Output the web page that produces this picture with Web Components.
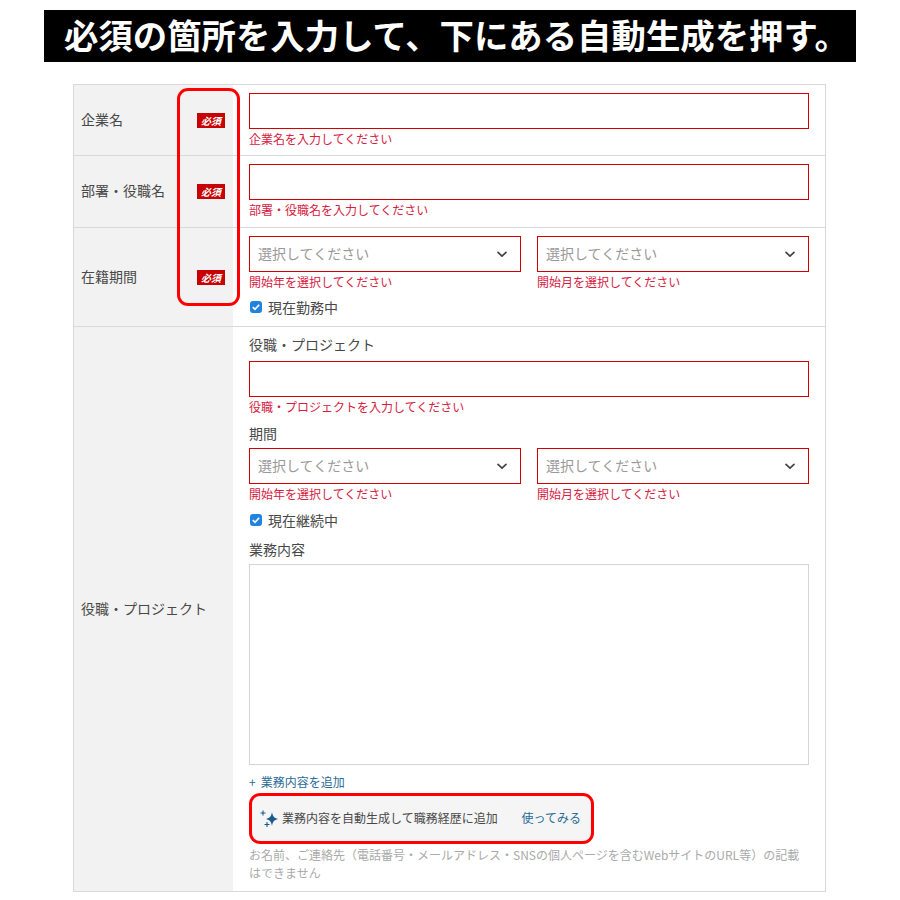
<!DOCTYPE html>
<html lang="ja"><head><meta charset="utf-8"><title>Form</title>
<style>
html,body{margin:0;background:#fff;}
body{font-family:"Noto Sans CJK JP","Noto Sans",sans-serif;color:#484848;position:relative;width:900px;height:900px;overflow:hidden;}
.page{display:flex;flex-direction:column;padding:10px 44px 0;}
</style></head><body>
<div class="page">
<x-banner>必須の箇所を入力して、下にある自動生成を押す。</x-banner>
<x-form>
  <x-row label="企業名" required pad="8 8">
    <x-text-field></x-text-field><x-error>企業名を入力してください</x-error>
  </x-row>
  <x-row label="部署・役職名" required pad="8 9">
    <x-text-field></x-text-field><x-error>部署・役職名を入力してください</x-error>
  </x-row>
  <x-row label="在籍期間" required pad="8 9">
    <x-pair>
      <div><x-select></x-select><x-error>開始年を選択してください</x-error></div>
      <div><x-select></x-select><x-error>開始月を選択してください</x-error></div>
    </x-pair>
    <x-check style="margin-top:7px;margin-bottom:0">現在勤務中</x-check>
  </x-row>
  <x-row label="役職・プロジェクト" pad="7 9">
    <x-sub style="margin-bottom:7px">役職・プロジェクト</x-sub>
    <x-text-field></x-text-field><x-error>役職・プロジェクトを入力してください</x-error>
    <x-sub style="margin-top:8px;margin-bottom:5px">期間</x-sub>
    <x-pair>
      <div><x-select></x-select><x-error>開始年を選択してください</x-error></div>
      <div><x-select></x-select><x-error>開始月を選択してください</x-error></div>
    </x-pair>
    <x-check style="margin-top:8px;margin-bottom:1px">現在継続中</x-check>
    <x-sub style="margin-top:8px;margin-bottom:5px">業務内容</x-sub>
    <x-textarea></x-textarea>
    <x-add>業務内容を追加</x-add>
    <x-ai action="使ってみる">業務内容を自動生成して職務経歴に追加</x-ai>
    <x-note>お名前、ご連絡先（電話番号・メールアドレス・SNSの個人ページを含むWebサイトのURL等）の記載はできません</x-note>
  </x-row>
</x-form>
</div>
<x-annot style="left:177px;top:88px;width:63px;height:218px"></x-annot>
<x-annot style="left:249px;top:793px;width:345px;height:51px"></x-annot>
<script>
function def(name, css, html, init){
  customElements.define(name, class extends HTMLElement{
    constructor(){super();this.attachShadow({mode:'open'}).innerHTML='<style>'+css+'</style>'+html;}
    connectedCallback(){ if(init) init(this,this.shadowRoot); }
  });
}
def('x-banner',':host{display:flex;align-items:center;justify-content:flex-start;box-sizing:border-box;padding:0 0 3px 20px;background:#000;color:#fff;height:52px;font-size:34.4px;font-weight:700;white-space:nowrap;line-height:1;}','<slot></slot>');
def('x-form',':host{display:block;margin:22px 30px 0 29px;border:1px solid #d9d9d9;border-bottom:0;}','<slot></slot>');
def('x-row',`:host{display:grid;grid-template-columns:159px 1fr;border-bottom:1px solid #d9d9d9;}
.head{background:#f2f2f2;display:flex;align-items:center;justify-content:space-between;padding:0 8px 0 7px;font-size:14px;color:#484848;}
.l{margin-bottom:3px;}
.badge{display:none;background:#c80000;color:#fff;font-size:10px;font-style:italic;font-weight:700;line-height:15px;height:15px;width:28px;text-align:center;}
:host([required]) .badge{display:block;}
.body{padding:8px 16px 8px 16px;min-width:0;display:flex;flex-direction:column;}`,
`<div class="head"><span class="l"></span><span class="badge">必須</span></div><div class="body"><slot></slot></div>`,
(el,sr)=>{sr.querySelector('.l').textContent=el.getAttribute('label');
  const p=(el.getAttribute('pad')||'8 8').split(' ');const b=sr.querySelector('.body');b.style.paddingTop=p[0]+'px';b.style.paddingBottom=p[1]+'px';});
def('x-text-field',`:host{display:block;}input{display:block;box-sizing:border-box;width:100%;height:36px;border:1px solid #d40000;background:#fff;margin:0;padding:0 8px;outline:0;border-radius:0;}`,'<input type="text" aria-label="入力">');
def('x-error',':host{display:block;font-size:12px;line-height:12px;color:#d6203f;padding:4px 0 2px;white-space:nowrap;}','<slot></slot>');
def('x-pair',':host{display:grid;grid-template-columns:1fr 1fr;gap:16px;}','<slot></slot>');
def('x-select',`:host{display:flex;align-items:center;justify-content:space-between;box-sizing:border-box;height:36px;border:1px solid #d40000;padding:0 13px 0 8px;font-size:14px;color:#999;}
span{margin-bottom:3px;}svg{display:block;}`,'<span>選択してください</span><svg width="10" height="7" viewBox="0 0 10 7" fill="none" stroke="#444" stroke-width="1.7" stroke-linecap="round" stroke-linejoin="round"><path d="M1 1.300 5 5.200l4-3.900"/></svg>');
def('x-check',`:host{display:flex;align-items:center;gap:6px;font-size:14px;line-height:20px;color:#484848;padding-left:1px;}
svg{display:block;flex:none;}`,'<svg width="12" height="12" viewBox="0 0 12 12"><rect width="12" height="12" rx="3" fill="#1f83e0"/><path d="M2.800 6.200 5 8.300l4.200-4.600" fill="none" stroke="#fff" stroke-width="1.700"/></svg><slot></slot>');
def('x-sub',':host{display:block;font-size:14px;line-height:20px;color:#484848;}','<slot></slot>');
def('x-textarea',`:host{display:block;}textarea{display:block;box-sizing:border-box;width:100%;height:201px;border:1px solid #d4d4d4;margin:0;padding:8px;resize:none;outline:0;border-radius:0;background:#fff;}`,'<textarea aria-label="業務内容"></textarea>');
def('x-add',':host{display:block;font-size:12px;line-height:16px;color:#2a6a96;margin-top:9px;}','+<span style="padding-left:5px"><slot></slot></span>');
def('x-ai',`:host{display:flex;align-items:center;box-sizing:border-box;height:46px;margin:6px 0 0 2px;width:342px;background:#f5f5f5;border-radius:8px;padding:0 12px 3px 8px;font-size:12px;color:#484848;white-space:nowrap;}
svg{display:block;flex:none;margin:3px 2px 0 0;}
a{margin-left:auto;color:#2a6a96;text-decoration:none;}`,
`<svg width="21" height="22" viewBox="0 0 21 22" fill="none"><path fill="#1a5a90" d="M13 4C13.700 8.300 15 9.900 19 11 15 12.100 13.700 13.700 13 18 12.300 13.700 11 12.100 7 11 11 9.900 12.300 8.300 13 4Z"/><path stroke="#1a5a90" stroke-width="1.100" d="M4 2.500v5M1.500 5h5M8 14v5M5.500 16.500h5"/></svg><slot></slot><a href="#" onclick="return false"></a>`,
(el,sr)=>{sr.querySelector('a').textContent=el.getAttribute('action');});
def('x-note',':host{display:block;font-size:12px;line-height:18px;color:#aaa;margin-top:4px;}','<slot></slot>');
def('x-annot',':host{position:absolute;box-sizing:border-box;border:3px solid #f00;border-radius:11px;display:block;pointer-events:none;}','');
</script>
</body></html>
